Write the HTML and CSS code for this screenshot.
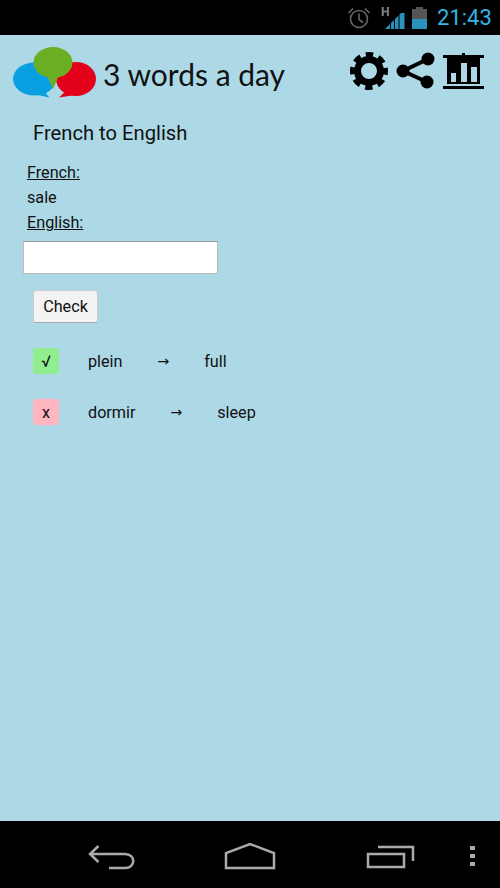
FILE: index.html
```html
<!DOCTYPE html>
<html lang="en">
<head>
  <meta charset="UTF-8">
  <meta name="viewport" content="width=device-width, initial-scale=1.0">
  <title>3 words a day</title>
  <link rel="stylesheet" href="styles.css">
</head>
<body>
  <div class="status-bar">
    <svg class="st-alarm" width="24" height="24" viewBox="0 0 24 24" fill="none" stroke="#666" stroke-width="1.6">
      <circle cx="12" cy="13" r="8.5"/>
      <path d="M12 7.5V13.5L16 16.5"/>
      <path d="M1.5 7L6 2.5M22.5 7L18 2.5"/>
    </svg>
    <div class="st-signal">
      <span class="st-h">H</span>
      <svg width="20" height="16" viewBox="0 0 20 16" fill="#2a93bd">
        <path d="M0 16L5 11V16ZM6 10L9 7V16H6ZM10 6L13.5 2.5V16H10ZM14.500 1.500L16 0H19.500V16H14.500Z"/>
      </svg>
    </div>
    <div class="st-battery"><div class="st-battery-level"></div></div>
    <span class="st-time">21:43</span>
  </div>

  <div class="main">
    <div class="en-tete">
      <svg class="logo" width="85" height="52" viewBox="0 0 85 52">
        <ellipse cx="22.500" cy="32" rx="21.500" ry="16.500" fill="#0a9fe0"/>
        <path d="M30 42L37.500 50.500L26 48Z" fill="#0a9fe0"/>
        <ellipse cx="64" cy="32" rx="20" ry="17" fill="#e3001b"/>
        <path d="M56 42L47 50.500L60 48.500Z" fill="#e3001b"/>
        <ellipse cx="41" cy="15.500" rx="19.500" ry="15.500" fill="#6aaf23"/>
        <path d="M35 28L41 42L47 28Z" fill="#6aaf23"/>
      </svg>
      <span class="titre">3 words a day</span>
      <div class="actions">
        <svg class="ic-gear" width="40" height="40" viewBox="0 0 40 40" fill="none" stroke="#000">
          <circle cx="20" cy="20" r="11.500" stroke-width="7"/>
          <circle cx="20" cy="20" r="15.500" stroke-width="7" stroke-dasharray="7 5.170" stroke-dashoffset="3.500"/>
        </svg>
        <svg class="ic-share" width="40" height="38" viewBox="0 0 40 38" fill="#000">
          <path d="M32 7L7 19L31 30" fill="none" stroke="#000" stroke-width="4"/>
          <circle cx="7" cy="19" r="6.500"/>
          <circle cx="32" cy="7" r="6.500"/>
          <circle cx="31" cy="30" r="6.500"/>
        </svg>
        <svg class="ic-stats" width="41" height="38" viewBox="0 0 41 38" fill="#000">
          <rect x="19" y="0" width="3" height="3"/>
          <rect x="0" y="2" width="41" height="3"/>
          <path fill-rule="evenodd" d="M4 5H37V31H4ZM8 20V29H13V20ZM18 10V29H24V10ZM28 14V29H34V14Z"/>
          <rect x="0" y="33" width="41" height="3"/>
        </svg>
      </div>
    </div>

    <h3>French to English</h3>

    <div class="champ">
      <div class="lib">French:</div>
      <div class="mot">sale</div>
      <div class="lib">English:</div>
    </div>
    <input type="text" class="saisie">
    <button class="btn-check">Check</button>

    <div class="ligne">
      <span class="marque ok">√</span>
      <span>plein</span>
      <span class="fleche">→</span>
      <span>full</span>
    </div>
    <div class="ligne">
      <span class="marque ko">x</span>
      <span>dormir</span>
      <span class="fleche">→</span>
      <span>sleep</span>
    </div>
  </div>

  <div class="nav-bar">
    <svg class="nav-back" width="47" height="26" viewBox="0 0 47 26" fill="none" stroke="#aaa" stroke-width="2.500">
      <path d="M10.500 2L2 10L10.500 18M2 10H37C48 10 48 24 37 24H21"/>
    </svg>
    <svg class="nav-home" width="52" height="28" viewBox="0 0 52 28" fill="none" stroke="#aaa" stroke-width="2.500">
      <path d="M2 26V11L26 2L50 11V26Z"/>
    </svg>
    <svg class="nav-recent" width="49" height="24" viewBox="0 0 49 24" fill="none" stroke="#aaa" stroke-width="2.500">
      <rect x="2" y="9" width="36" height="13"/>
      <path d="M12 2H47V16"/>
    </svg>
    <div class="nav-dots"><i></i><i></i><i></i></div>
  </div>
</body>
</html>
```

FILE: styles.css
```css
* {
  box-sizing: border-box;
}

body {
  margin: 0;
  height: 888px;
  display: flex;
  flex-direction: column;
  font-family: Roboto, "Liberation Sans", sans-serif;
  font-size: 16.2px;
  color: #111;
  background-color: #add8e6;
  overflow: hidden;
}

.status-bar {
  height: 35px;
  background-color: #000;
  display: flex;
  align-items: center;
  padding-left: 347px;
  flex-shrink: 0;
}

.st-signal {
  width: 25px;
  height: 22px;
  margin-left: 9px;
  position: relative;
}

.st-signal svg {
  position: absolute;
  right: 0;
  bottom: 0;
}

.st-h {
  position: absolute;
  left: 1px;
  top: 0;
  font-size: 12px;
  font-weight: 700;
  line-height: 11px;
  color: #888;
}

.st-battery {
  width: 15px;
  height: 20px;
  margin-left: 7px;
  margin-top: 2px;
  background-color: #555;
  display: flex;
  align-items: flex-end;
  position: relative;
}

.st-battery::before {
  content: "";
  position: absolute;
  left: 4px;
  top: -2px;
  width: 7px;
  height: 2px;
  background-color: #555;
}

.st-battery-level {
  width: 100%;
  height: 10px;
  background-color: #2a93bd;
}

.st-time {
  margin-left: 10px;
  font-size: 22px;
  color: #33b5e5;
}

.main {
  flex: 1;
  background-color: #add8e6;
  padding: 12px 16px 0 12px;
}

.en-tete {
  display: flex;
  align-items: flex-start;
}

.titre {
  font-family: Lato, sans-serif;
  font-size: 30px;
  line-height: 40px;
  margin-left: 6px;
  margin-top: 7px;
  color: #111;
}

.actions {
  margin-left: auto;
  display: flex;
  align-items: flex-start;
  gap: 7px;
  margin-top: 4px;
}

.ic-share {
  margin-top: 1px;
}

.ic-stats {
  margin-top: 2px;
}

h3 {
  font-size: 20.2px;
  font-weight: 400;
  line-height: 24px;
  margin: 22px 0 0 21px;
}

.champ {
  margin: 15px 0 0 15px;
  line-height: 25px;
}

.lib {
  text-decoration: underline;
}

.saisie {
  display: block;
  width: 195px;
  height: 33px;
  margin: 6px 0 0 11px;
  background: #fff;
  border: 1px solid #bbb;
  border-top-color: #999;
  border-radius: 1px;
}

.btn-check {
  display: block;
  width: 65px;
  height: 33px;
  margin: 16px 0 0 21px;
  padding: 0;
  font-family: Roboto, sans-serif;
  font-size: 16.2px;
  color: #111;
  background: #f3f3f3;
  border: 1px solid #ccc;
  border-bottom-color: #aaa;
  border-radius: 3px;
}

.ligne {
  display: flex;
  align-items: center;
  gap: 35px;
  height: 26px;
  margin: 25px 0 0 21px;
}

.marque {
  width: 26px;
  height: 26px;
  margin-right: -6px;
  border-radius: 3px;
  display: flex;
  align-items: center;
  justify-content: center;
}

.ok {
  background-color: #90ee90;
}

.ko {
  background-color: #ffb6c1;
}

.fleche {
  font-size: 14px;
  font-family: "DejaVu Sans", sans-serif;
}

.nav-bar {
  height: 67px;
  background-color: #000;
  flex-shrink: 0;
  display: flex;
  align-items: flex-start;
  padding: 22px 0 0 88px;
}

.nav-back {
  margin-top: 1px;
}

.nav-home {
  margin-left: 89px;
  margin-top: -1px;
}

.nav-recent {
  margin-left: 90px;
  margin-top: 2px;
}

.nav-dots {
  margin-left: 55px;
  margin-top: 3px;
  display: flex;
  flex-direction: column;
  gap: 4px;
}

.nav-dots i {
  display: block;
  width: 5px;
  height: 4px;
  background-color: #aaa;
}
```
